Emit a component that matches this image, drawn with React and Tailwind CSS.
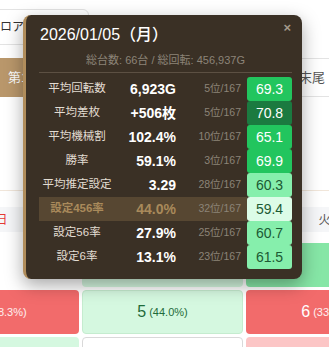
import React from 'react'

const stats = [
  { label: '平均回転数', value: '6,923G', rank: '5位/167', score: '69.3', tone: 'bg-[#22c55e] text-white' },
  { label: '平均差枚', value: '+506枚', rank: '5位/167', score: '70.8', tone: 'bg-[#1b7a40] text-white' },
  { label: '平均機械割', value: '102.4%', rank: '10位/167', score: '65.1', tone: 'bg-[#22c55e] text-white' },
  { label: '勝率', value: '59.1%', rank: '3位/167', score: '69.9', tone: 'bg-[#22c55e] text-white' },
  { label: '平均推定設定', value: '3.29', rank: '28位/167', score: '60.3', tone: 'bg-[#86efac] text-[#1c5a34]' },
  { label: '設定456率', value: '44.0%', rank: '32位/167', score: '59.4', tone: 'bg-[#dcfce7] text-[#1c5a34]', active: true },
  { label: '設定56率', value: '27.9%', rank: '25位/167', score: '60.7', tone: 'bg-[#86efac] text-[#1c5a34]' },
  { label: '設定6率', value: '13.1%', rank: '23位/167', score: '61.5', tone: 'bg-[#86efac] text-[#1c5a34]' },
]

function DayCell({ className, day, rate, light }) {
  return (
    <div className={`h-[44px] rounded-[4px] flex items-center justify-center gap-[3px] ${className}`}>
      {day && (
        <>
          <span className="text-[16px] font-medium">{day}</span>
          <span className={`text-[11px] font-medium ${light ? 'text-white/90' : ''}`}>({rate})</span>
        </>
      )}
    </div>
  )
}

function DayPopup() {
  return (
    <div className="absolute left-[23px] top-[15px] w-[279px] h-[264px] rounded-[8px] border-l-[3px] border-[#b08d5c] bg-[#3a3025] shadow-[0_6px_18px_rgba(0,0,0,0.35)] pl-[13px] pr-[10px] pt-[10px]">
      <button className="absolute right-[11px] top-[6px] text-[13px] font-bold text-[#a49a8c] leading-none">×</button>
      <div className="h-[20px] flex items-center pl-[1px] text-[16px] font-medium text-white">2026/01/05（月）</div>
      <div className="mt-[8px] h-[14px] flex items-center justify-center text-[11px] text-[#8c8478]">
        総台数: 66台 / 総回転: 456,937G
      </div>
      <div className="mt-[5px] border-t border-[#5c5043]" />
      <div className="pt-[4px]">
        {stats.map((s) => (
          <div key={s.label} className="flex h-[24px]">
            <div className={`flex flex-1 items-center ${s.active ? 'bg-[#574732]' : ''}`}>
              <div className={`w-[76px] text-center text-[11.5px] ${s.active ? 'font-bold text-[#a98a5b]' : 'text-[#e2dcd2]'}`}>
                {s.label}
              </div>
              <div className={`w-[61px] text-right text-[14px] font-semibold ${s.active ? 'text-[#a98a5b]' : 'text-white'}`}>
                {s.value}
              </div>
              <div className="flex-1 text-right pr-[6px] text-[10.5px] text-[#8c8478]">{s.rank}</div>
            </div>
            <div className={`w-[45px] rounded-[3px] flex items-center justify-center text-[14px] font-medium ${s.tone}`}>
              {s.score}
            </div>
          </div>
        ))}
      </div>
    </div>
  )
}

export default function App() {
  return (
    <div className="relative w-[329px] h-[347px] overflow-hidden bg-white font-['Liberation_Sans','Noto_Sans_CJK_JP',sans-serif]">
      <div className="pt-[9px]">
        <div className="-ml-[40px] w-[129px] h-[36px] rounded-[6px] border border-[#e3e3e3] pl-[27px] flex items-center text-[12px] text-[#333]">
          フロア
        </div>
      </div>

      <div className="mt-[13px] h-[39px] flex">
        <div className="flex-1 bg-[#b9976b] text-white text-[13px] flex items-center pl-[8px]">第1週</div>
        <div className="w-[49px] shrink-0 border-y border-[#e3e3e3] flex items-center pl-[19px] text-[13px] text-[#555]">末尾</div>
      </div>

      <div className="mt-[93px] border-t border-[#f1e6da]" />

      <div className="-ml-[82px] w-[489px] mt-[16px]">
        <div className="grid grid-cols-3 gap-[3px] h-[25px] bg-[#f5f6f8] text-[12px]">
          <div className="flex items-center justify-center pl-[6px] text-[#e53935]">日</div>
          <div className="flex items-center justify-center text-[#555]">月</div>
          <div className="flex items-center justify-center pr-[4px] text-[#555]">火</div>
        </div>
        <div className="mt-[11px] grid grid-cols-3 gap-[3px]">
          <DayCell className="bg-white" />
          <DayCell className="bg-[#d4f7df]" />
          <DayCell className="bg-[#86e6a6]" />

          <DayCell className="bg-[#f26b6b] text-white pl-[12px]" day="4" rate="8.3%" light />
          <DayCell className="bg-[#d5f8e0] border border-[#c5eccf] text-[#1f6b3a]" day="5" rate="44.0%" />
          <DayCell className="bg-[#f26b6b] text-white" day="6" rate="33.5%" light />

          <DayCell className="bg-[#d5f8e0]" />
          <DayCell className="bg-white border border-[#d9d9d9]" />
          <DayCell className="bg-[#fcc6c6]" />
        </div>
      </div>

      <DayPopup />
    </div>
  )
}
